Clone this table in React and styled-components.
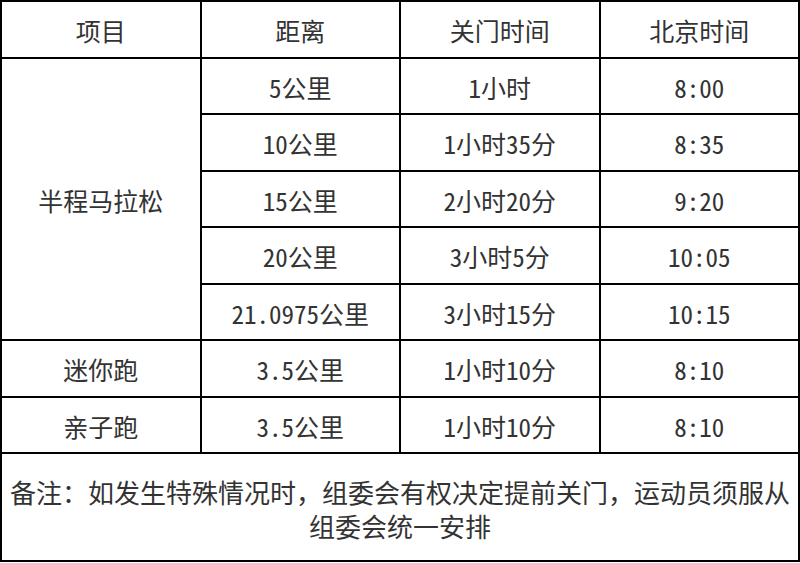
import React from "react";
import styled, { createGlobalStyle } from "styled-components";

const GlobalStyle = createGlobalStyle`
  html, body {
    margin: 0;
    padding: 0;
    background: #fff;
  }
`;

const rows = [
  { dist: "5公里", close: "1小时", time: "8:00" },
  { dist: "10公里", close: "1小时35分", time: "8:35" },
  { dist: "15公里", close: "2小时20分", time: "9:20" },
  { dist: "20公里", close: "3小时5分", time: "10:05" },
  { dist: "21.0975公里", close: "3小时15分", time: "10:15" },
];

const others = [
  { name: "迷你跑", dist: "3.5公里", close: "1小时10分", time: "8:10" },
  { name: "亲子跑", dist: "3.5公里", close: "1小时10分", time: "8:10" },
];

const Table = styled.table`
  width: 800px;
  border-collapse: collapse;
  table-layout: fixed;
  font-family: "Noto Sans Mono CJK SC", "Noto Sans CJK SC", sans-serif;
  font-size: 25px;
  color: #333;
`;

const Row = styled.tr`
  height: ${(p) => p.$h || 56.5}px;
`;

const Cell = styled.td`
  border: 2px solid #000;
  text-align: center;
  vertical-align: middle;
  padding: 2px 4px 0;
  line-height: 30px;
  white-space: nowrap;
`;

const Note = styled.td`
  border: 2px solid #000;
  text-align: center;
  vertical-align: middle;
  padding: 4px 2px 0;
  font-size: 26px;
  line-height: 34px;
`;

export default function App() {
  return (
    <>
      <GlobalStyle />
      <Table>
        <tbody>
          <Row>
            <Cell>项目</Cell>
            <Cell>距离</Cell>
            <Cell>关门时间</Cell>
            <Cell>北京时间</Cell>
          </Row>
          {rows.map((r, i) => (
            <Row key={r.dist}>
              {i === 0 && <Cell rowSpan={rows.length}>半程马拉松</Cell>}
              <Cell>{r.dist}</Cell>
              <Cell>{r.close}</Cell>
              <Cell>{r.time}</Cell>
            </Row>
          ))}
          {others.map((r) => (
            <Row key={r.name}>
              <Cell>{r.name}</Cell>
              <Cell>{r.dist}</Cell>
              <Cell>{r.close}</Cell>
              <Cell>{r.time}</Cell>
            </Row>
          ))}
          <Row $h={108}>
            <Note colSpan={4}>
              备注：如发生特殊情况时，组委会有权决定提前关门，运动员须服从组委会统一安排
            </Note>
          </Row>
        </tbody>
      </Table>
    </>
  );
}
